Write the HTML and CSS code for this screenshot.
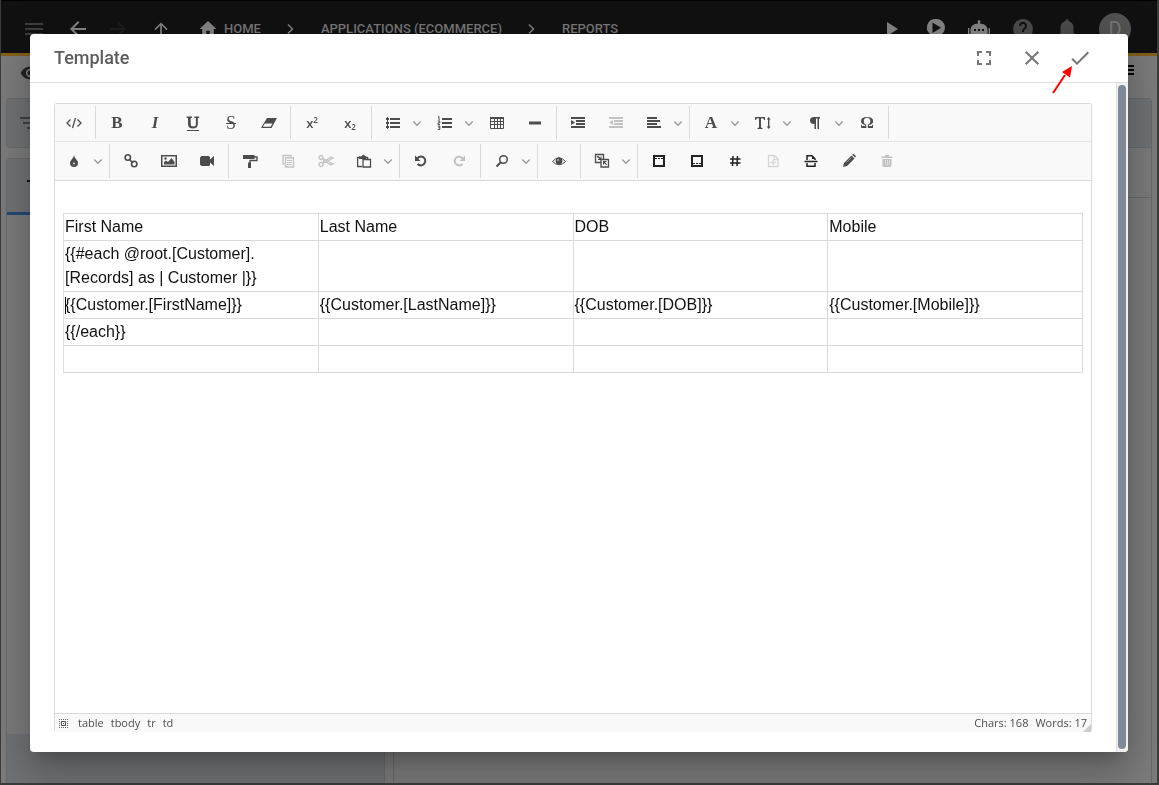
FILE: index.html
```html
<!DOCTYPE html>
<html lang="en">
<head>
<meta charset="utf-8">
<meta name="viewport" content="width=device-width, initial-scale=1">
<title>Template</title>
<link rel="stylesheet" href="styles.css">
</head>
<body>
<svg class="sprite" aria-hidden="true">
  <symbol id="chev" viewBox="0 0 10 10"><path d="M1.300 3.500 5 7.300 8.700 3.500" fill="none" stroke="#999" stroke-width="1.300"/></symbol>
  <symbol id="next" viewBox="0 0 24 24"><path d="M9.500 7 8.500 8l4 4-4 4 1 1 5-5z"/></symbol>
</svg>

<div class="app">
  <header class="topbar">
    <nav class="nav" aria-label="Main">
      <button class="top-btn menu" aria-label="Menu"><svg viewBox="0 0 24 24"><path d="M3 18h18v-2H3zm0-5h18v-2H3zm0-7v2h18V6z"/></svg></button>
      <button class="top-btn back" aria-label="Back"><svg viewBox="0 0 24 24"><path d="M20 11H7.800l5.600-5.600L12 4l-8 8 8 8 1.400-1.400L7.800 13H20z"/></svg></button>
      <button class="top-btn forward" aria-label="Forward"><svg viewBox="0 0 24 24"><path d="m12 4-1.400 1.400 5.600 5.600H4v2h12.200l-5.600 5.600L12 20l8-8z"/></svg></button>
      <button class="top-btn up" aria-label="Up"><svg viewBox="0 0 24 24"><path d="m5.500 12 1.100 1.200 4.600-4.600V20h1.700V8.600l4.500 4.600 1.200-1.200L12 5.500z"/></svg></button>
      <a class="crumb home" href="#"><svg viewBox="0 0 24 24"><path d="M10 20v-6h4v6h5v-8h3L12 2.500 2 12h3v8z"/></svg>HOME</a>
      <svg class="next"><use href="#next"/></svg>
      <a class="crumb" href="#">APPLICATIONS (ECOMMERCE)</a>
      <svg class="next"><use href="#next"/></svg>
      <a class="crumb" href="#">REPORTS</a>
    </nav>
    <div class="actions">
      <button class="top-btn" aria-label="Run"><svg viewBox="0 0 24 24"><path d="M8 5v14l11-7z"/></svg></button>
      <button class="top-btn" aria-label="Preview run"><svg viewBox="0 0 24 24"><path fill-rule="evenodd" d="M13 2a8.500 8.500 0 0 1 1 17l-9 3 2-5A8.500 8.500 0 0 1 13 2zM9.500 5.500v10.500l8.500-5.300z"/></svg></button>
      <button class="top-btn" aria-label="Assistant"><svg viewBox="0 0 24 24"><path fill-rule="evenodd" d="M11 6.500V5.500a1.400 1.400 0 1 1 2 0v1q7 .5 7.500 6v7h-17v-7Q4 7 11 6.500zM7 12v2h2v-2zm4 0v2h2v-2zm4 0v2h2v-2zM1 11h1.400v7H1zm20.600 0H23v7h-1.400z"/></svg></button>
      <button class="top-btn dim" aria-label="Help"><svg viewBox="0 0 24 24"><path d="M12 2a10 10 0 1 0 0 20 10 10 0 0 0 0-20zm1 17h-2v-2h2zm2.100-7.700-.9.900c-.7.700-1.200 1.300-1.200 2.800h-2v-.5c0-1.100.5-2.100 1.200-2.800l1.200-1.300a2 2 0 1 0-3.400-1.400H8a4 4 0 1 1 7.100 2.300z"/></svg></button>
      <button class="top-btn dim" aria-label="Notifications"><svg viewBox="0 0 24 24"><path d="M18.500 16v-5.500c0-3.200-1.900-5.700-5-6.500V3.500a1.500 1.500 0 0 0-3 0V4c-3.100.8-5 3.300-5 6.500V16l-2 2v1h17v-1z"/></svg></button>
      <button class="avatar" aria-label="Account">D</button>
    </div>
  </header>

  <div class="subbar">
    <svg class="view-icon" viewBox="0 0 24 24"><path d="M12 4.500C7 4.500 2.700 7.600 1 12c1.700 4.400 6 7.500 11 7.500s9.300-3.100 11-7.500c-1.700-4.400-6-7.500-11-7.500zM12 17a5 5 0 1 1 0-10 5 5 0 0 1 0 10zm0-8a3 3 0 1 0 0 6 3 3 0 0 0 0-6z"/></svg>
    <svg class="list-icon" viewBox="0 0 18 12"><path d="M0 0h18v2H0zm0 4h18v2H0zm0 4h18v2H0z"/></svg>
  </div>

  <main class="panels">
    <div class="side">
      <div class="filter"><svg viewBox="0 0 18 12"><path d="M0 0h18v2H0zm3 5h12v2H3zm4 5h4v2H7z"/></svg></div>
      <div class="records">
        <div class="record-tab"><span class="dash"></span></div>
        <div class="record-body"></div>
        <div class="record-foot"></div>
      </div>
    </div>
    <div class="detail">
      <div class="detail-head"></div>
      <div class="detail-tools"></div>
    </div>
  </main>
</div>

<div class="overlay">
  <section class="dialog" role="dialog" aria-labelledby="dialog-title">
    <header class="dialog-head">
      <h1 class="title" id="dialog-title">Template</h1>
      <button class="head-btn" aria-label="Full screen"><svg viewBox="0 0 24 24"><path d="M7 14H5v5h5v-2H7zm-2-4h2V7h3V5H5zm12 7h-3v2h5v-5h-2zM14 5v2h3v3h2V5z"/></svg></button>
      <button class="head-btn" aria-label="Close"><svg viewBox="0 0 24 24"><path d="M19 6.400 17.600 5 12 10.600 6.400 5 5 6.400l5.600 5.600L5 17.600 6.400 19l5.600-5.600 5.600 5.600 1.400-1.400-5.600-5.600z"/></svg></button>
      <button class="head-btn confirm" aria-label="Apply"><svg viewBox="0 0 24 24"><path d="M9 16.200 4.800 12l-1.400 1.400L9 19 21 7l-1.400-1.400z"/></svg>
        <svg class="pointer" viewBox="0 0 24 32"><path d="M3 29 15 11" stroke="#f00" stroke-width="2"/><path d="M22 2 12 8l8 5.500z" fill="#f00"/></svg></button>
    </header>

    <div class="dialog-body">
      <div class="editor">
        <div class="tools" role="toolbar" aria-label="Formatting">
          <div class="group">
            <button class="tool" aria-label="Source"><svg viewBox="0 0 16 16"><path d="M4.500 4.500 1 8l3.500 3.500M11.500 4.500 15 8l-3.500 3.500M9.500 3l-3 10" class="line"/></svg></button>
          </div>
          <div class="group">
            <button class="tool letter" aria-label="Bold"><b>B</b></button>
            <button class="tool letter" aria-label="Italic"><i>I</i></button>
            <button class="tool letter" aria-label="Underline"><u>U</u></button>
            <button class="tool letter" aria-label="Strikethrough"><s>S</s></button>
            <button class="tool" aria-label="Eraser"><svg viewBox="0 0 16 16"><path fill-rule="evenodd" d="M6 3h10l-5.500 10H0zM3.800 8.500 2 11.800h7.500l2-3.300z"/></svg></button>
          </div>
          <div class="group">
            <button class="tool script" aria-label="Superscript"><span>x<sup>2</sup></span></button>
            <button class="tool script" aria-label="Subscript"><span>x<sub>2</sub></span></button>
          </div>
          <div class="group">
            <button class="tool" aria-label="Bullet list"><svg viewBox="0 0 16 16"><path d="M5 3h10v2H5zm0 4h10v2H5zm0 4h10v2H5zM1 3h3v2H1zm0 4h3v2H1zm0 4h3v2H1z"/><path d="M2.500 2v12" stroke="#4c4c4c"/></svg></button>
            <button class="drop" aria-label="Bullet list options"><svg><use href="#chev"/></svg></button>
            <button class="tool" aria-label="Numbered list"><svg viewBox="0 0 16 16"><path d="M5 3h10v2H5zm0 4h10v2H5zm0 4h10v2H5z"/><path class="fine" d="m1 2 1-.5v4M.8 6h2v1.800H1v1.700h2M.8 11h2v3.500h-2m.5-1.800h1.500"/></svg></button>
            <button class="drop" aria-label="Numbered list options"><svg><use href="#chev"/></svg></button>
            <button class="tool" aria-label="Table"><svg viewBox="0 0 16 16"><path class="fine" d="M1.500 2.500h13v11h-13zM1.500 6.500h13M1.500 9.500h13M5.500 3v10.500M8.500 3v10.500M11.500 3v10.500"/><path d="M1 2h14v2H1z"/></svg></button>
            <button class="tool" aria-label="Horizontal line"><svg viewBox="0 0 16 16"><path d="M2 6.500h12v3H2z"/></svg></button>
          </div>
          <div class="group">
            <button class="tool" aria-label="Indent"><svg viewBox="0 0 16 16"><path d="M1 2h14v2H1zm5 3h9v2H6zm0 3h9v2H6zm-5 3h14v2H1zM1 5l4 2.500L1 10z"/></svg></button>
            <button class="tool" aria-label="Outdent" disabled><svg viewBox="0 0 16 16"><path d="M1 2h14v2H1zm5 3h9v2H6zm0 3h9v2H6zm-5 3h14v2H1zM5 5v5L1 7.500z"/></svg></button>
            <button class="tool" aria-label="Align"><svg viewBox="0 0 16 16"><path d="M1 2h10v2H1zm0 3h13v2H1zm0 3h10v2H1zm0 3h14v2H1z"/></svg></button>
            <button class="drop" aria-label="Align options"><svg><use href="#chev"/></svg></button>
          </div>
          <div class="group">
            <button class="tool letter" aria-label="Font"><b>A</b></button>
            <button class="drop" aria-label="Font options"><svg><use href="#chev"/></svg></button>
            <button class="tool" aria-label="Font size"><svg viewBox="0 0 16 16"><path d="M0 2h10v3H9q0-1.800-1.500-1.800H6v9q0 .8 1.500.8v1h-5v-1Q4 13 4 12.200v-9H2.500Q1 3.200 1 5H0z"/><path d="M13 4h1.400v8H13z"/><path d="m11.700 4.500 2-2.500 2 2.500zm0 7 2 2.500 2-2.500z"/></svg></button>
            <button class="drop" aria-label="Font size options"><svg><use href="#chev"/></svg></button>
            <button class="tool" aria-label="Paragraph format"><svg viewBox="0 0 16 16"><path d="M7 2h6v1.500h-1V14h-1.500V3.500H9V14H7.500V9Q3 9 3 5.500T7 2z"/></svg></button>
            <button class="drop" aria-label="Paragraph options"><svg><use href="#chev"/></svg></button>
            <button class="tool letter" aria-label="Special character"><b>Ω</b></button>
          </div>
        </div>
        <div class="tools second" role="toolbar" aria-label="Editing">
          <div class="group">
            <button class="tool" aria-label="Colour"><svg viewBox="0 0 16 16"><path fill-rule="evenodd" d="M8 2q0 2.500 2.500 4.800Q12 8.300 12 10a4 4 0 0 1-8 0q0-1.700 1.500-3.200Q8 4.500 8 2zm0 7q-.9 1-.8 1.700a.8.800 0 0 0 1.600 0Q8.800 10 8 9z"/></svg></button>
            <button class="drop" aria-label="Colour options"><svg><use href="#chev"/></svg></button>
          </div>
          <div class="group">
            <button class="tool" aria-label="Link"><svg viewBox="0 0 16 16"><g fill="none" stroke="#4c4c4c" stroke-width="1.600"><circle cx="4.800" cy="4.500" r="2.700"/><circle cx="11.200" cy="11" r="2.700"/><path d="m5.800 6 4.400 4"/></g></svg></button>
            <button class="tool" aria-label="Image"><svg viewBox="0 0 16 16"><path fill-rule="evenodd" d="M0 2h16v12H0zm1.500 1.500v9h13v-9z"/><path d="M3 11.500V9l2-1.500L7 9l3.500-4 3 4v2.500z"/><circle cx="4.500" cy="5.500" r="1.200"/></svg></button>
            <button class="tool" aria-label="Video"><svg viewBox="0 0 16 16"><path d="M2.500 3h7q1.500 0 1.500 1.500v2L15 3v10l-4-3.500v2q0 1.500-1.500 1.500h-7L1 11.500v-7z"/></svg></button>
          </div>
          <div class="group">
            <button class="tool" aria-label="Copy format"><svg viewBox="0 0 16 16"><path d="M1 2h11.500v4H1z"/><path class="line" d="M12 4h3v3.500H8V10"/><path d="M6 9.500h3V15H6z"/></svg></button>
            <button class="tool" aria-label="Copy" disabled><svg viewBox="0 0 16 16"><path class="line" d="M11 4V2.500H3V11h1.500M5.500 5h8v9h-8z"/><path class="fine" d="M7 7.500h5M7 9.500h5M7 11.500h5"/></svg></button>
            <button class="tool" aria-label="Cut" disabled><svg viewBox="0 0 16 16"><circle class="line" cx="3" cy="4.500" r="2"/><circle class="line" cx="3" cy="11.500" r="2"/><path class="line" d="m5 5.500 10 5.500-2 1L5 7M5 10.500 15 5l-2-1L5 9"/></svg></button>
            <button class="tool" aria-label="Paste"><svg viewBox="0 0 16 16"><path class="line" d="M6 13.500H1.600v-9h10V6M7 6.500h7.500v7.500H7z"/><path d="M3 3.500h2.500Q6.500 1 8 2l2 1.500V6H3z"/></svg></button>
            <button class="drop" aria-label="Paste options"><svg><use href="#chev"/></svg></button>
          </div>
          <div class="group">
            <button class="tool" aria-label="Undo"><svg viewBox="0 0 16 16"><path d="M4 5.500Q7 2.500 10 4a4.500 4.500 0 1 1-5.500 7" fill="none" stroke="#4c4c4c" stroke-width="2"/><path d="M2 2.500V8h5.500z"/></svg></button>
            <button class="tool" aria-label="Redo" disabled><svg viewBox="0 0 16 16"><path d="M12 5.500Q9 2.500 6 4a4.500 4.500 0 1 0 5.500 7" fill="none" stroke="#c2c2c2" stroke-width="2"/><path d="M14 2.500V8H8.500z"/></svg></button>
          </div>
          <div class="group">
            <button class="tool" aria-label="Find"><svg viewBox="0 0 16 16"><circle cx="9.500" cy="6.500" r="3.800" fill="none" stroke="#4c4c4c" stroke-width="1.500"/><path d="m7 9-4.500 4.500" stroke="#4c4c4c" stroke-width="2"/></svg></button>
            <button class="drop" aria-label="Find options"><svg><use href="#chev"/></svg></button>
          </div>
          <div class="group">
            <button class="tool" aria-label="Preview"><svg viewBox="0 0 16 16"><path class="fine" d="M1.500 8.500Q8 1 14.500 8.500 8 15 1.500 8.500z"/><circle cx="8" cy="8" r="3.400"/><circle cx="7" cy="7" r=".8" fill="#f9f9f9"/></svg></button>
          </div>
          <div class="group">
            <button class="tool" aria-label="Resize"><svg viewBox="0 0 16 16"><path class="line" d="M1.500 1.500h8v8h-8z"/><path fill="#f9f9f9" stroke="#4c4c4c" stroke-width="1.300" d="M7 6.500h7.500V14H7z"/><path d="M3 3h1.500l2 2V3.500h1V7H4V6h1.500L3 4zM9 8h3.500v1H11l2 2.500-.7.700L10 10v1.500H9z"/></svg></button>
            <button class="drop" aria-label="Resize options"><svg><use href="#chev"/></svg></button>
          </div>
          <div class="group last">
            <button class="tool dark" aria-label="Page header"><svg viewBox="0 0 16 16"><path fill-rule="evenodd" d="M2 2h12v12H2zm2 2v8h8V4z"/><path d="M4 5h2v1H4zm3 0h2v1H7zm3 0h2v1h-2z"/></svg></button>
            <button class="tool dark" aria-label="Page footer"><svg viewBox="0 0 16 16"><path fill-rule="evenodd" d="M2 2h12v12H2zm2 2v8h8V4z"/><path d="M4 10h2v1H4zm3 0h2v1H7zm3 0h2v1h-2z"/></svg></button>
            <button class="tool dark" aria-label="Page number"><svg viewBox="0 0 16 16"><path d="M6 3 5.500 13M10.500 3 10 13M3 6h10.500M3 10h10.500" stroke="#222" stroke-width="1.500"/></svg></button>
            <button class="tool faint" aria-label="Add page" disabled><svg viewBox="0 0 16 16"><path class="line" d="M3.500 2.500h6L13 6v7.500H3.500z"/><path class="line" d="M9 3v3.500h4M8.200 7v5M5.500 9.500H11"/></svg></button>
            <button class="tool dark" aria-label="Page break"><svg viewBox="0 0 16 16"><path d="M4 7V2.700h5L12 6v1M4 10v3.300h8V10M1.500 8.500h13" fill="none" stroke="#222" stroke-width="1.500"/><path d="M9 2.500V6h3.500z"/></svg></button>
            <button class="tool" aria-label="Edit"><svg viewBox="0 0 16 16"><path d="m2 14 1-4 7.500-7.500 3 3L6 13zM11.200 1.800l.8-.6q.8-.3 1.300.2l1.300 1.300q.4.600 0 1.200l-.6.700z"/><path d="m5.500 9.500 5-5" stroke="#aaa" stroke-width=".8"/></svg></button>
            <button class="tool" aria-label="Delete" disabled><svg viewBox="0 0 16 16"><path d="M6 2h4v1.500h3.500V5h-11V3.500H6z"/><path fill-rule="evenodd" d="M3.500 6h9v6.500Q12.500 14 11 14H5q-1.500 0-1.500-1.500zM6 7v5.500h.5V7zm2 0v5.500h.5V7zm2 0v5.500h.5V7z"/></svg></button>
          </div>
        </div>

        <div class="page" contenteditable="true" role="textbox" aria-label="Template content" spellcheck="false">
          <table class="grid">
            <tbody>
              <tr><td>First Name</td><td>Last Name</td><td>DOB</td><td>Mobile</td></tr>
              <tr><td>{{#each @root.[Customer].<wbr>[Records] as | Customer |}}</td><td></td><td></td><td></td></tr>
              <tr><td><span class="caret"></span>{{Customer.[FirstName]}}</td><td>{{Customer.[LastName]}}</td><td>{{Customer.[DOB]}}</td><td>{{Customer.[Mobile]}}</td></tr>
              <tr><td>{{/each}}</td><td></td><td></td><td></td></tr>
              <tr><td>&nbsp;</td><td></td><td></td><td></td></tr>
            </tbody>
          </table>
        </div>

        <footer class="status">
          <button class="select-all" aria-label="Select all"><svg viewBox="0 0 9 9"><path d="M0 .5h9M0 8.500h9M.5 0v9M8.500 0v9" stroke="#666" stroke-dasharray="1 1" fill="none"/><path d="M2.500 2.500h4v4h-4z" stroke="#4c4c4c" fill="none"/><path d="M4 4h1v1H4z"/></svg></button>
          <a href="#">table</a><a href="#">tbody</a><a href="#">tr</a><a href="#">td</a>
          <span class="count">Chars: 168</span><span>Words: 17</span>
          <span class="grip"></span>
        </footer>
      </div>
      <div class="scrollbar"><div class="thumb"></div></div>
    </div>
  </section>
</div>
</body>
</html>
```
FILE: styles.css
```css
* { box-sizing: border-box; }

body {
  margin: 0;
  font-family: Roboto, sans-serif;
  background: #333;
  overflow: hidden;
}

button {
  margin: 0;
  padding: 0;
  border: 0;
  background: none;
  font: inherit;
  color: inherit;
}

a { color: inherit; text-decoration: none; }
svg { display: block; fill: currentColor; }
.sprite { width: 0; height: 0; position: absolute; }

/* Application behind the dialog */
.app {
  height: 100vh;
  display: flex;
  flex-direction: column;
  background: #7c7c7c;
  border: solid #3c3c3c;
  border-width: 0 2px 2px 1px;
}

.topbar {
  flex: none;
  height: 56px;
  padding: 3px 26px 0 21px;
  display: flex;
  align-items: center;
  justify-content: space-between;
  background: #111;
  border-top: 1px solid #000;
  border-bottom: 3px solid #82611a;
  color: #858585;
}

.nav, .actions { display: flex; align-items: center; }
.actions { gap: 20px; }
.top-btn svg, .next { width: 24px; height: 24px; }
.menu { color: #3e3e3e; margin-right: 20px; }
.back { margin-right: 16px; }
.forward { color: #1e1e1e; margin-right: 19px; }
.up { margin-right: 23px; }
.dim { color: #4b4b4b; }
.next { margin: 0 18px; }

.crumb {
  display: flex;
  align-items: center;
  font-size: 13px;
  font-weight: 500;
  line-height: 24px;
  color: #777;
  white-space: nowrap;
}

.home svg { width: 20px; height: 20px; margin: 0 6px 0 2px; color: #858585; }

.avatar {
  width: 32px;
  height: 32px;
  border-radius: 50%;
  background: #525252;
  color: #777;
  font-size: 20px;
}

.subbar {
  flex: none;
  height: 34px;
  padding: 0 23px 0 19px;
  display: flex;
  align-items: center;
  justify-content: space-between;
}

.view-icon { width: 20px; height: 20px; fill: #222; }
.list-icon { width: 18px; height: 12px; margin-bottom: 4px; fill: #000; }

.panels {
  flex: 1;
  min-height: 0;
  padding: 8px 5px 0;
  display: grid;
  grid-template-columns: 379px 1fr;
  gap: 8px;
}

.side { display: flex; flex-direction: column; gap: 10px; min-height: 0; }

.filter, .records, .detail {
  border: 1px solid #696a6b;
  border-radius: 4px;
}

.filter {
  flex: none;
  height: 50px;
  padding: 18px 13px;
  background: #717375;
}

.filter svg { width: 18px; height: 12px; fill: #3f4142; }

.records {
  flex: 1;
  display: flex;
  flex-direction: column;
  border-radius: 4px 4px 0 0;
  border-bottom: 0;
}

.record-tab {
  height: 56px;
  padding: 21px 20px;
  background: #717375;
  border-bottom: 3px solid #214974;
}

.dash { display: block; width: 16px; height: 2px; background: #111; }
.record-body { flex: 1; }
.record-foot { height: 49px; background: #707376; }
.detail { border-bottom: 0; border-radius: 4px 4px 0 0; }
.detail-head { height: 49px; background: #707376; border-bottom: 1px solid #696a6b; }
.detail-tools { height: 50px; border-bottom: 1px solid #696a6b; }

/* Dialog */
.overlay {
  position: fixed;
  inset: 0;
  padding: 34px 31px 33px 30px;
  display: flex;
}

.dialog {
  flex: 1;
  min-width: 0;
  display: flex;
  flex-direction: column;
  background: #fff;
  border-radius: 4px;
  box-shadow: 0 11px 15px -7px rgba(0, 0, 0, .2), 0 24px 38px 3px rgba(0, 0, 0, .14), 0 9px 46px 8px rgba(0, 0, 0, .12);
}

.dialog-head {
  height: 49px;
  padding: 0 24px;
  display: flex;
  align-items: center;
  border-bottom: 1px solid #ddd;
  color: #757575;
}

.title {
  flex: 1;
  margin: 0;
  font-size: 18px;
  font-weight: 500;
  line-height: 24px;
  color: #5c5c5c;
}

.head-btn { width: 48px; height: 48px; display: grid; place-items: center; }
.head-btn svg { width: 24px; height: 24px; }
.confirm { position: relative; }
.confirm .pointer { position: absolute; left: -6px; top: 30px; width: 24px; height: 32px; }

.dialog-body { flex: 1; min-height: 0; display: flex; }

.scrollbar {
  flex: none;
  width: 12px;
  padding: 2px 2px 3px 1px;
  background: #f0f0f0;
  border-left: 1px solid #ddd;
  border-radius: 0 0 4px 0;
}

.thumb { height: 100%; border-radius: 4px; background: #808998; }

/* Editor */
.editor {
  flex: 1;
  min-width: 0;
  margin: 20px 24px;
  display: flex;
  flex-direction: column;
  border: 1px solid #dadada;
  border-bottom: 0;
  border-radius: 3px;
  color: #4c4c4c;
}

.tools {
  flex: none;
  height: 38px;
  display: flex;
  background: #f9f9f9;
  border-bottom: 1px solid #e5e5e5;
}

.second { height: 39px; border-color: #dadada; }

.group {
  margin: 2px 0;
  padding: 0 2px;
  display: flex;
  align-items: center;
  border-right: 1px solid #dadada;
}

.group:first-child { padding-left: 0; }
.last { border-right: 0; }

.tool { width: 38px; height: 34px; display: grid; place-items: center; }
.tool svg { width: 16px; height: 16px; }
.tool:disabled { color: #c2c2c2; }
.tool.faint { color: #d6d6d6; }
.dark { color: #222; }
.drop { width: 14px; height: 34px; }
.drop svg { width: 10px; height: 10px; }
.line { fill: none; stroke: currentColor; stroke-width: 1.3; }
.fine { fill: none; stroke: currentColor; stroke-width: 1; }

.letter { font: bold 17px/20px "Liberation Serif", serif; }
.letter u { font-weight: normal; text-decoration-thickness: 1px; text-underline-offset: 2px; -webkit-text-stroke: 1px #4c4c4c; }
.letter s { font-weight: normal; font-size: 18px; text-decoration-thickness: 1px; }
.script { font: 600 13px/20px "Open Sans", sans-serif; }
.script sup, .script sub { font-size: 8px; line-height: 0; }
.script sub { vertical-align: -2px; }

.page {
  flex: 1;
  padding: 32px 8px 8px;
  outline: 0;
  font: 16px/24px "Liberation Sans", Arial, sans-serif;
  color: #111;
}

.grid {
  width: 100%;
  border-collapse: collapse;
  table-layout: fixed;
}

.grid td { padding: 1px; border: 1px solid #dadada; vertical-align: middle; }
.caret { display: inline-block; width: 1px; height: 17px; margin-right: -1px; background: #000; vertical-align: middle; }

.status {
  flex: none;
  height: 19px;
  padding: 0 4px;
  position: relative;
  display: flex;
  align-items: center;
  gap: 7px;
  background: #f9f9f9;
  border-top: 1px solid #dadada;
  font: 11px/18px "Open Sans", sans-serif;
}

.select-all { margin-right: 3px; }
.select-all svg { width: 9px; height: 9px; }
.count { margin-left: auto; }

.grip {
  position: absolute;
  right: 0;
  bottom: 0;
  border: solid transparent;
  border-width: 4px;
  border-right-color: #ccc;
  border-bottom-color: #ccc;
}
```
